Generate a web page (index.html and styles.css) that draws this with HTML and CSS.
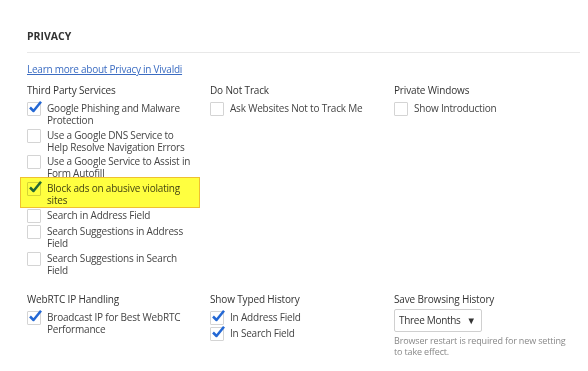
FILE: index.html
```html
<!DOCTYPE html>
<html lang="en">
<head>
  <meta charset="UTF-8" />
  <title>Privacy Settings</title>
  <link rel="stylesheet" href="styles.css">
</head>
<body>
  <div class="page">
    <h1 class="title">PRIVACY</h1>
    <hr class="divider" />
    <a class="learn" href="#">Learn more about Privacy in Vivaldi</a>

    <div class="grid">
      <div class="group">
        <div class="group-title">Third Party Services</div>
        <label class="item checked"><span class="box"></span><span class="text">Google Phishing and Malware Protection</span></label>
        <label class="item"><span class="box"></span><span class="text">Use a Google DNS Service to Help Resolve Navigation Errors</span></label>
        <label class="item"><span class="box"></span><span class="text">Use a Google Service to Assist in Form Autofill</span></label>
        <label class="item checked marked"><span class="box"></span><span class="text">Block ads on abusive violating sites</span><span class="highlight"></span></label>
        <label class="item"><span class="box"></span><span class="text">Search in Address Field</span></label>
        <label class="item"><span class="box"></span><span class="text">Search Suggestions in Address Field</span></label>
        <label class="item"><span class="box"></span><span class="text">Search Suggestions in Search Field</span></label>
      </div>

      <div class="group">
        <div class="group-title">Do Not Track</div>
        <label class="item"><span class="box"></span><span class="text">Ask Websites Not to Track Me</span></label>
      </div>

      <div class="group">
        <div class="group-title">Private Windows</div>
        <label class="item"><span class="box"></span><span class="text">Show Introduction</span></label>
      </div>

      <div class="group">
        <div class="group-title">WebRTC IP Handling</div>
        <label class="item checked"><span class="box"></span><span class="text">Broadcast IP for Best WebRTC Performance</span></label>
      </div>

      <div class="group">
        <div class="group-title">Show Typed History</div>
        <label class="item checked tight"><span class="box"></span><span class="text">In Address Field</span></label>
        <label class="item checked tight"><span class="box"></span><span class="text">In Search Field</span></label>
      </div>

      <div class="group">
        <div class="group-title">Save Browsing History</div>
        <div class="select">Three Months <span class="arrow">&#9660;</span></div>
        <div class="note">Browser restart is required for new setting to take effect.</div>
      </div>
    </div>
  </div>
</body>
</html>
```

FILE: styles.css
```css
html, body {
  margin: 0;
  padding: 0;
  background: #ffffff;
  font-family: 'Open Sans', sans-serif;
  color: #3a3a3a;
}

.page {
  width: 553px;
  padding: 29px 0 0 27px;
}

.title {
  margin: 0;
  font-size: 10.5px;
  font-weight: 700;
  letter-spacing: 0;
  line-height: 14px;
  color: #333;
}

.divider {
  border: none;
  border-top: 1px solid #e8e8e8;
  margin: 9px 0 0 0;
}

.learn {
  display: inline-block;
  margin-top: 9px;
  font-size: 10px;
  letter-spacing: -0.25px;
  line-height: 14px;
  color: #3b6cc2;
  text-decoration: underline;
}

.grid {
  display: grid;
  grid-template-columns: 183px 184px 186px;
  row-gap: 13px;
  margin-top: 5px;
}

.group-title {
  font-size: 10px;
  letter-spacing: -0.15px;
  line-height: 14px;
  color: #333;
  margin-bottom: 5px;
}

.item {
  position: relative;
  display: flex;
  align-items: flex-start;
  gap: 6px;
  font-size: 10px;
  letter-spacing: -0.2px;
  line-height: 12px;
  color: #444;
  margin-bottom: 2.7px;
  padding-right: 16px;
}

.item.tight {
  margin-bottom: 2px;
}

.box {
  position: relative;
  flex: none;
  width: 12px;
  height: 12px;
  border: 1px solid #d4d4d4;
  border-radius: 1px;
  background: #fff;
}

.checked .box::after {
  content: "";
  position: absolute;
  left: 1px;
  top: -2px;
  width: 13px;
  height: 12px;
  background: url("data:image/svg+xml;utf8,<svg xmlns='http://www.w3.org/2000/svg' viewBox='0 0 13 12'><path d='M1 6.5 L4.5 10 L12 0.8' fill='none' stroke='%232468d4' stroke-width='2.5' stroke-linejoin='round'/></svg>") no-repeat;
}

.highlight {
  position: absolute;
  left: -7px;
  right: 10px;
  top: -5px;
  bottom: -2px;
  background: #ffff40;
  border: 1.5px solid #efc030;
  mix-blend-mode: multiply;
}

.select {
  display: flex;
  width: fit-content;
  align-items: center;
  gap: 6px;
  margin-top: -2px;
  height: 21px;
  padding: 0 5px 0 4px;
  border: 1px solid #d0d0d0;
  border-radius: 2px;
  font-size: 10px;
  letter-spacing: -0.3px;
  color: #333;
}

.arrow {
  font-size: 9.5px;
  color: #333;
}

.note {
  margin-top: 3px;
  font-size: 9px;
  letter-spacing: -0.15px;
  line-height: 11.5px;
  color: #888;
  width: 175px;
}
```
